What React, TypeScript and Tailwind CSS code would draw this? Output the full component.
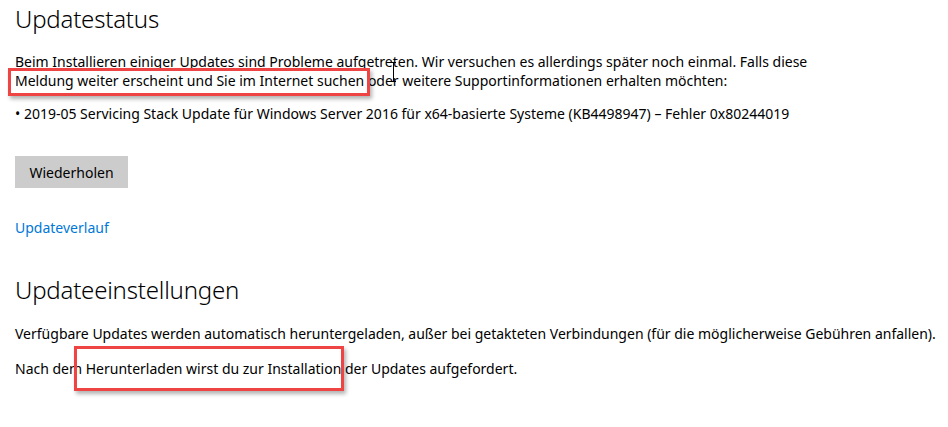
import React from 'react';

const font = { fontFamily: '"Noto Sans", "Open Sans", sans-serif' };

export default function App() {
    return (
        <div className="relative w-[948px] h-[427px] bg-white text-black overflow-hidden" style={font}>
            <div className="flex flex-col items-start pl-[15px] pt-[3px] text-[14px] leading-[19px]">
                {/* Updatestatus */}
                <h1 className="text-[24px] font-light leading-[32px] tracking-[-0.2px]">Updatestatus</h1>

                <p className="mt-[17px]">
                    Beim Installieren einiger Updates sind Probleme aufgetreten. Wir versuchen es allerdings später noch einmal. Falls diese
                    <br />
                    Meldung weiter erscheint und Sie im Internet suchen oder weitere Supportinformationen erhalten möchten:
                </p>
                <p className="mt-[14px]">
                    • 2019-05 Servicing Stack Update für Windows Server 2016 für x64-basierte Systeme (KB4498947) – Fehler 0x80244019
                </p>

                <button className="mt-[33px] w-[113px] h-[32px] bg-[#cccccc]">Wiederholen</button>

                <a className="mt-[30px] text-[#0078d7]">Updateverlauf</a>

                {/* Updateeinstellungen */}
                <h2 className="mt-[37px] text-[24px] font-light leading-[32px] tracking-[-0.2px]">Updateeinstellungen</h2>

                <div className="flex flex-col gap-[16px] mt-[18px]">
                    <p>Verfügbare Updates werden automatisch heruntergeladen, außer bei getakteten Verbindungen (für die möglicherweise Gebühren anfallen).</p>
                    <p>Nach dem Herunterladen wirst du zur Installation der Updates aufgefordert.</p>
                </div>
            </div>

            {/* red highlight boxes */}
            <div className="absolute left-[8px] top-[68px] w-[362px] h-[28px] border-[3px] border-[#ee4444] shadow-[2px_3px_4px_rgba(0,0,0,0.3)]" />
            <div className="absolute left-[74px] top-[346px] w-[270px] h-[45px] border-[3px] border-[#ee4444] shadow-[2px_3px_4px_rgba(0,0,0,0.3)]" />

            {/* text cursor */}
            <div className="absolute left-[393px] top-[62px] w-[1px] h-[20px] bg-black" />
            <div className="absolute left-[391px] top-[62px] w-[5px] h-[1px] bg-black" />
            <div className="absolute left-[391px] top-[81px] w-[5px] h-[1px] bg-black" />
        </div>
    );
}
